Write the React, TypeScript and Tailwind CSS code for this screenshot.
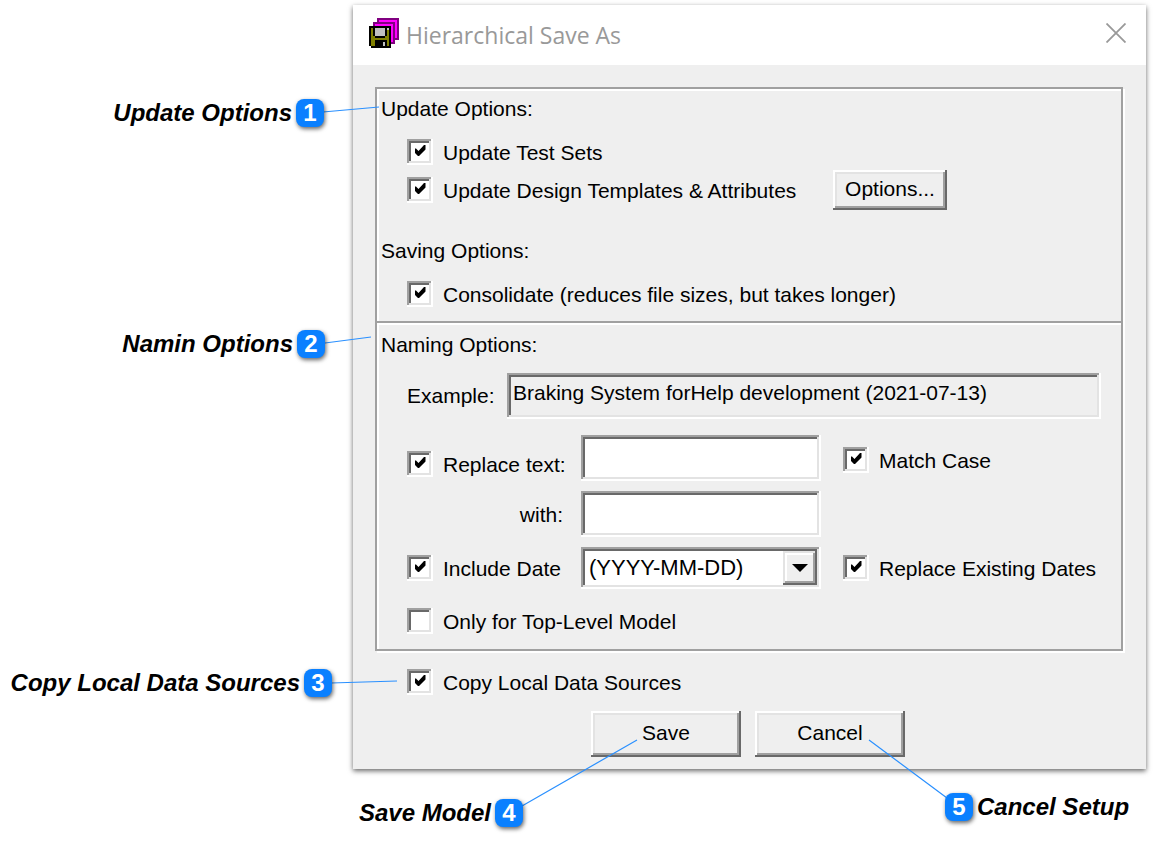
import { useState } from "react";
import type { ComponentPropsWithoutRef, ReactNode } from "react";

const SUNKEN =
    "shadow-[inset_-2px_-2px_#fff,inset_2px_2px_#a0a0a0,inset_-4px_-4px_#e3e3e3,inset_4px_4px_#696969]";
const RAISED =
    "shadow-[inset_-2px_-2px_#696969,inset_2px_2px_#fff,inset_-4px_-4px_#a0a0a0,inset_4px_4px_#e3e3e3]";
const ETCHED = "border-2 border-[#a0a0a0] shadow-[inset_2px_2px_#fff,2px_2px_#fff]";

const CheckBox = ({ label, checked = true }: { label: string; checked?: boolean }) => {
    return (
        <label className="flex items-center gap-[10px]">
            <span className="grid size-[26px] shrink-0">
                <input
                    type="checkbox"
                    defaultChecked={checked}
                    className={`peer col-start-1 row-start-1 size-[26px] appearance-none bg-white ${SUNKEN}`}
                />
                <svg
                    viewBox="0 0 26 26"
                    aria-hidden="true"
                    className="pointer-events-none invisible col-start-1 row-start-1 size-[26px] peer-checked:visible"
                >
                    <path d="M8 9.5h1l2.5 2.5L17 6h1.5v4.5L12 17h-1L8 14Z" />
                </svg>
            </span>
            <span className="pt-0.5 whitespace-nowrap">{label}</span>
        </label>
    );
};

const BevelButton = ({ className, ...props }: ComponentPropsWithoutRef<"button">) => {
    return <button type="button" className={`bg-[#efefef] pb-[3px] ${RAISED} ${className}`} {...props} />;
};

const TextBox = ({ className = "bg-white", ...props }: ComponentPropsWithoutRef<"input">) => {
    return <input type="text" className={`h-[46px] w-full min-w-0 px-[6px] pb-[6px] outline-none ${SUNKEN} ${className}`} {...props} />;
};

const Callout = ({ n, className, children }: { n: number; className: string; children: ReactNode }) => {
    return (
        <div className={`absolute flex items-center gap-1 text-2xl leading-7 font-bold whitespace-nowrap ${className}`}>
            <span className="italic">{children}</span>
            <span className="flex size-7 items-center justify-center rounded-lg bg-[#0a80ff] text-white shadow-[1px_2px_4px_#0009]">
                {n}
            </span>
        </div>
    );
};

const AppIcon = () => {
    return (
        <svg viewBox="0 0 15 15" shapeRendering="crispEdges" aria-hidden="true" className="size-[30px]">
            <path fill="#800080" d="M4 0h11v11H4z" />
            <path fill="#ff00ff" d="M5 1h9v9H5z" />
            <path fill="#800080" d="M2 2h11v11H2z" />
            <path fill="#ff00ff" d="M3 3h9v9H3z" />
            <path d="M0 4h11v11H1v-1H0z" />
            <path fill="#808000" d="M1 5h9v9H1z" />
            <path d="M2 5h7v4H8v1H3V9H2zM3 11h6v3H3zM9 5h1v1H9z" />
            <path fill="#c0c0c0" d="M3 5h5v4H3zM7 12h1v2H7zM9 5h1v1H9z" />
        </svg>
    );
};

const DateFormatSelect = () => {
    return (
        <div className={`grid h-[42px] bg-white ${SUNKEN}`}>
            <select
                aria-label="Date format"
                className="col-start-1 row-start-1 w-full appearance-none pl-2 text-[22px] leading-6 outline-none"
            >
                <option>(YYYY-MM-DD)</option>
            </select>
            <span className="pointer-events-none col-start-1 row-start-1 mr-1 flex size-[34px] items-center justify-center self-center justify-self-end bg-[#efefef] shadow-[inset_-2px_-2px_#696969,inset_2px_2px_#e3e3e3,inset_-4px_-4px_#a0a0a0,inset_4px_4px_#fff]">
                <svg viewBox="0 0 16 8" aria-hidden="true" className="h-2 w-4">
                    <path d="M0 0h16L8 8z" />
                </svg>
            </span>
        </div>
    );
};

export default function App() {
    const [name, setName] = useState("Braking System forHelp development (2021-07-13)");

    return (
        <div className="relative pt-[5px] pr-[7px] pb-[74px] pl-[353px] font-['Liberation_Sans',Arial,sans-serif] text-[21px] leading-6 text-black">
            <main className="bg-[#efefef] shadow-[0_2px_5px_#0009]">
                <header className="flex h-[60px] items-center bg-white pr-5 pb-1 pl-4">
                    <AppIcon />
                    <h1 className="ml-[7px] flex-1 pt-1 font-['Open_Sans','Noto_Sans',sans-serif] text-[23px] text-[#999]">
                        Hierarchical Save As
                    </h1>
                    <button type="button" aria-label="Close" className="text-[#999]">
                        <svg viewBox="0 0 20 20" aria-hidden="true" className="size-5">
                            <path d="M.5.5l19 19M19.5.5l-19 19" stroke="currentColor" strokeWidth="1.8" />
                        </svg>
                    </button>
                </header>

                <div className="pt-[22px] pr-[23px] pb-3 pl-[22px]">
                    <section className={`pb-[7px] pl-1 ${ETCHED}`}>
                        <h2 className="flex h-10 items-center">Update Options:</h2>
                        <div className="mt-[5px] pl-[26px]">
                            <div className="flex h-9 items-center">
                                <CheckBox label="Update Test Sets" />
                            </div>
                            <div className="grid h-10 grid-cols-[426px_114px] items-center">
                                <CheckBox label="Update Design Templates & Attributes" />
                                <BevelButton className="h-10">Options...</BevelButton>
                            </div>
                        </div>
                        <h2 className="mt-5 flex h-10 items-center pt-0.5">Saving Options:</h2>
                        <div className="mt-1 flex h-10 items-center pl-[26px]">
                            <CheckBox label="Consolidate (reduces file sizes, but takes longer)" />
                        </div>
                    </section>

                    <section className={`-mt-[2px] pr-[20px] pb-2 pl-1 ${ETCHED}`}>
                        <h2 className="flex h-11 items-center">Naming Options:</h2>
                        <div className="mt-[6px] flex items-center pl-[26px]">
                            <label htmlFor="example" className="w-[100px] shrink-0">
                                Example:
                            </label>
                            <TextBox
                                id="example"
                                className="bg-[#efefef]"
                                value={name}
                                onChange={(e) => setName(e.target.value)}
                            />
                        </div>
                        <div className="mt-4 grid grid-cols-[174px_240px_1fr] items-center gap-y-[10px] pl-[26px]">
                            <div className="pt-3">
                                <CheckBox label="Replace text:" />
                            </div>
                            <TextBox aria-label="Replace text" />
                            <div className="pt-1 pl-[22px]">
                                <CheckBox label="Match Case" />
                            </div>
                            <label htmlFor="with" className="pt-0.5 pr-[18px] text-right">
                                with:
                            </label>
                            <TextBox id="with" />
                            <span />
                            <CheckBox label="Include Date" />
                            <DateFormatSelect />
                            <div className="pl-[22px]">
                                <CheckBox label="Replace Existing Dates" />
                            </div>
                        </div>
                        <div className="mt-3 flex h-10 items-center pl-[26px]">
                            <CheckBox label="Only for Top-Level Model" checked={false} />
                        </div>
                    </section>

                    <div className="mt-[11px] flex h-10 items-center pl-8">
                        <CheckBox label="Copy Local Data Sources" />
                    </div>
                    <div className="mt-[9px] flex justify-center gap-[14px] pr-[2px]">
                        <BevelButton className="h-[46px] w-[150px]">Save</BevelButton>
                        <BevelButton className="h-[46px] w-[150px]">Cancel</BevelButton>
                    </div>
                </div>
            </main>

            {/* leader lines from each callout to its control */}
            <svg
                width="1153"
                height="843"
                aria-hidden="true"
                className="pointer-events-none absolute top-0 left-0"
                stroke="#2a90ff"
                strokeWidth="1.2"
            >
                <path d="M323 112L379 107M325 343L371 337M331 683L397 681M522 806L637 740M947 798L869 740" />
            </svg>

            <Callout n={1} className="top-[99px] right-[829px]">
                Update Options
            </Callout>
            <Callout n={2} className="top-[330px] right-[828px]">
                Namin Options
            </Callout>
            <Callout n={3} className="top-[669px] right-[821px]">
                Copy Local Data Sources
            </Callout>
            <Callout n={4} className="top-[799px] right-[630px]">
                Save Model
            </Callout>
            <Callout n={5} className="top-[793px] left-[945px] flex-row-reverse">
                Cancel Setup
            </Callout>
        </div>
    );
}
